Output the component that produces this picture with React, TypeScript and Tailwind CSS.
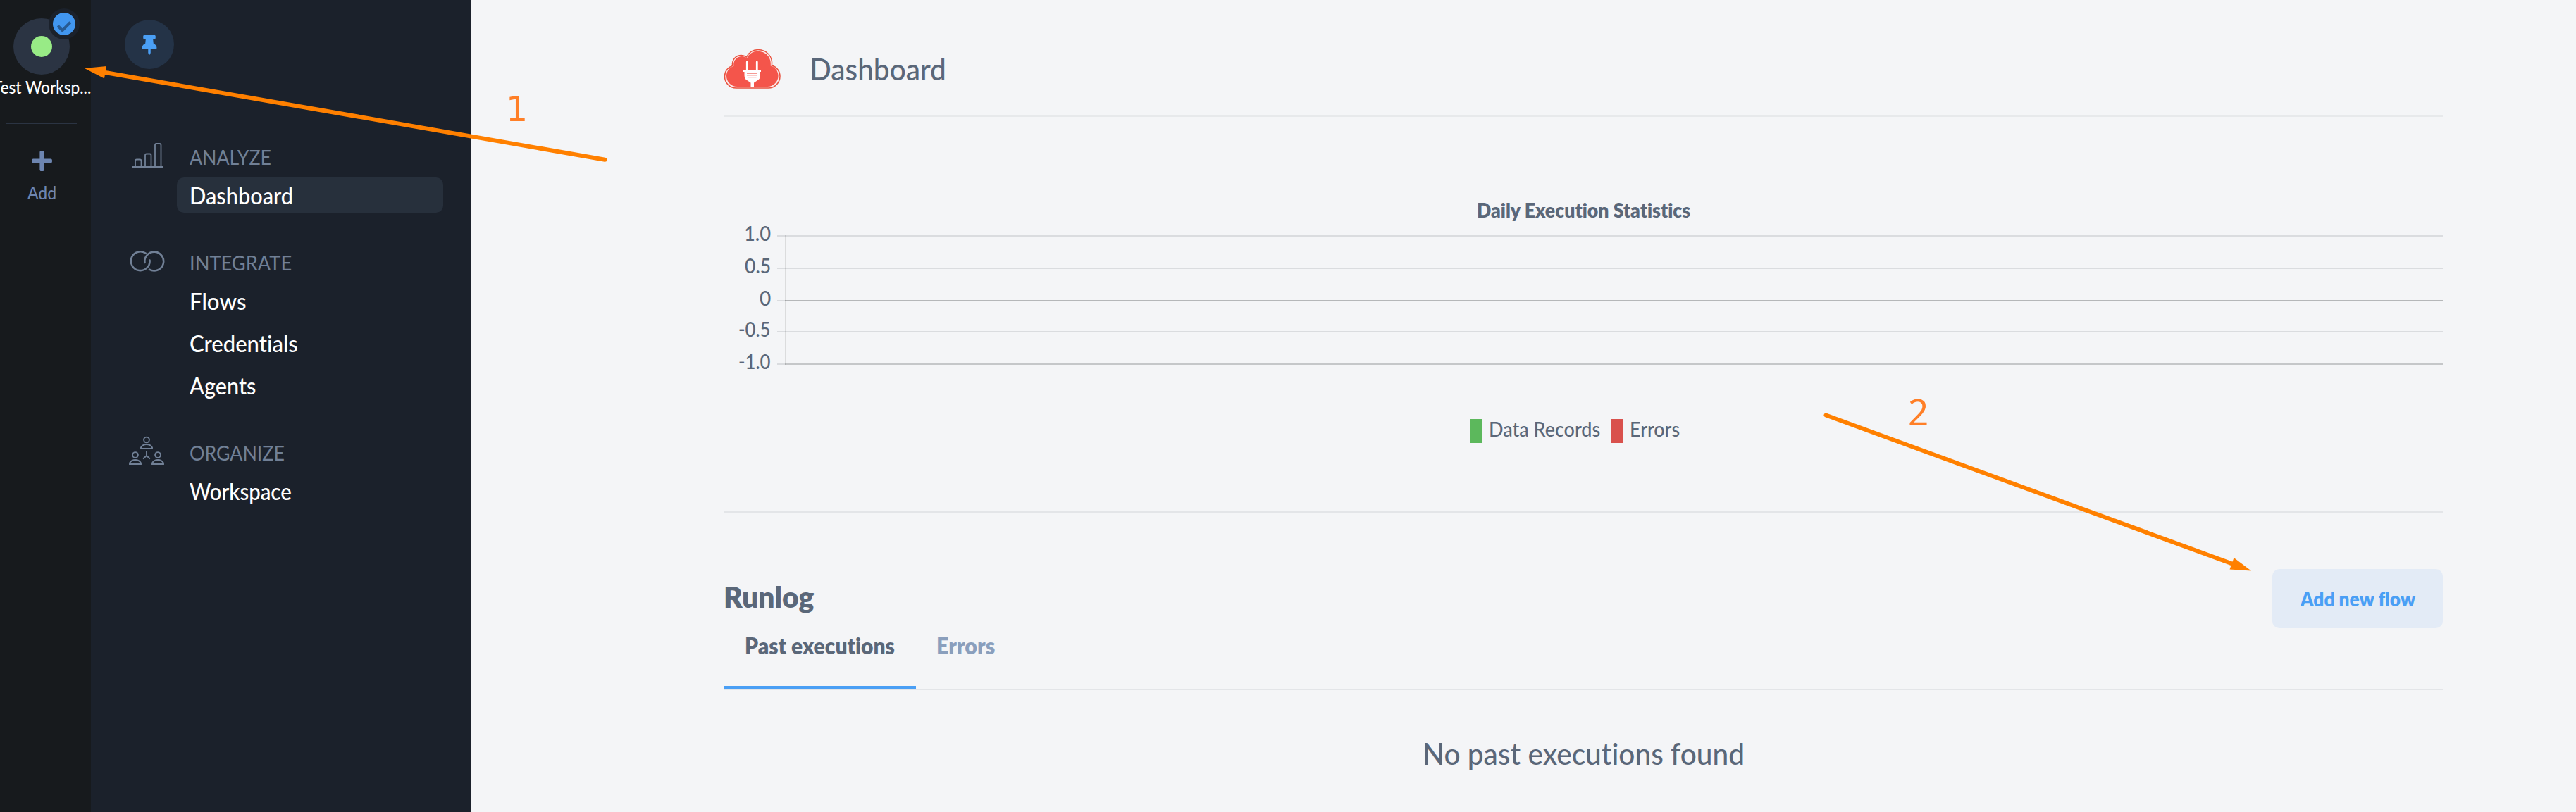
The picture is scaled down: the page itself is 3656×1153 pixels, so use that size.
import { useLayoutEffect, useRef, type ReactNode } from "react";
import { FaCheck, FaPlus, FaThumbtack } from "react-icons/fa";

/** One line of text, condensed horizontally to fill the width of its box. */
function Fit({ className, children }: { className: string; children: ReactNode }) {
  const box = useRef<HTMLSpanElement>(null);
  const text = useRef<HTMLSpanElement>(null);
  useLayoutEffect(() => {
    const b = box.current;
    const t = text.current;
    if (b && t) t.style.transform = `scaleX(${b.clientWidth / t.offsetWidth})`;
  }, []);
  return (
    <span ref={box} className={`block shrink-0 whitespace-nowrap ${className}`}>
      <span ref={text} className="inline-block origin-left">
        {children}
      </span>
    </span>
  );
}

function BarsIcon() {
  return (
    <svg className="h-[38px] w-[50px]" viewBox="183 201 50 38" fill="none" stroke="#718096" strokeWidth="1.8">
      <path d="M187 237H232" strokeWidth="2" />
      <path d="M192 236V228.500Q192 226.500 194 226.500H198.500Q200.500 226.500 200.500 228.500V236" />
      <path d="M206 236V220.500Q206 218.500 208 218.500H212.500Q214.500 218.500 214.500 220.500V236" />
      <path d="M220 236V206Q220 204 222 204H226.500Q228.500 204 228.500 206V236" />
    </svg>
  );
}

function RingsIcon() {
  return (
    <svg className="h-[34px] w-[50px]" viewBox="184 354 50 34" fill="none" stroke="#718096" strokeWidth="2.6" strokeLinecap="round">
      <path d="M206.600 359.600A13.400 13.400 0 1 0 212.500 369.500" />
      <path d="M205.500 373A13.400 13.400 0 1 1 212 382.600" />
    </svg>
  );
}

function PeopleIcon() {
  return (
    <svg className="h-[42px] w-[52px]" viewBox="182 619 52 42" fill="none" stroke="#718096" strokeWidth="1.9">
      <circle cx="208" cy="624.500" r="3.900" />
      <circle cx="192" cy="646" r="3.900" />
      <circle cx="224" cy="646" r="3.900" />
      <path d="M200 637V635.500Q202.500 631 208 631T216 635.500V637Z" />
      <path d="M184 659V657.500Q186.500 653 192 653T200 657.500V659Z" />
      <path d="M216 659V657.500Q218.500 653 224 653T232 657.500V659Z" />
      <path d="M208 640V647L203 651.500M208 647L213 651.500" />
    </svg>
  );
}

function CloudLogo() {
  const cloud = "M18 56C8 56 1.500 48 1.500 39.500C1.500 32 6 26.500 12.500 24.500C11.500 15 18 9.500 25 9.500C28 9.500 30.500 10.500 32.500 12C36 5 42 1.500 49 1.500C61 1.500 70 11 68.500 24C75.500 26 80 32 80 39.500C80 48 73 56 63.500 56Z";
  return (
    <svg className="h-[59px] w-[82px] shrink-0" viewBox="0 0 82 59" fill="none">
      <path d={cloud} fill="#fbe9e8" stroke="#e9523f" strokeWidth="1.500" />
      <path d={cloud} fill="#f4554b" transform="translate(2.600 2.300) scale(.937 .925)" />
      <path d="M33.300 19V31M47.300 19V31" stroke="#fff" strokeWidth="2.800" strokeLinecap="round" />
      <path d="M28 30H53V33H52V38Q52 43.500 47.500 45.500L43 48.500V55H38.500V48.500L34 45.500Q29.500 43.500 29.500 38V33H28Z" fill="#fff" />
      <path d="M33 35.300H48M33 38H48M34.500 40.700H46.500" stroke="#f59a94" strokeWidth="1.200" />
    </svg>
  );
}

type Item = { label: string; width: string; active?: boolean };

function Section({ icon, iconBox, title, titleWidth, items }: { icon: ReactNode; iconBox: string; title: string; titleWidth: string; items: Item[] }) {
  return (
    <section>
      <div className="mb-[5px] flex h-[50px]">
        <div className={`w-[140px] shrink-0 ${iconBox}`}>{icon}</div>
        <Fit className={`text-[29.500px] leading-[52px] font-normal text-[#718096] ${titleWidth}`}>{title}</Fit>
      </div>
      <nav className="ml-[122px] flex w-[378px] flex-col gap-2.5">
        {items.map((it) => (
          <a key={it.label} className={`flex h-[50px] rounded-[10px] pl-[18px] ${it.active ? "bg-[#27303c]" : ""}`}>
            <Fit className={`text-[32px] leading-[51px] text-white ${it.width}`}>{it.label}</Fit>
          </a>
        ))}
      </nav>
    </section>
  );
}

function AxisRow({ label, width, height, line }: { label: string; width: string; height: string; line: string }) {
  return (
    <div className={`flex items-start ${height}`}>
      <div className="-mt-[21px] flex w-[67px] shrink-0 justify-end">
        <Fit className={`text-[28px] leading-[36px] ${width}`}>{label}</Fit>
      </div>
      <div className="ml-[9px] h-[2px] w-[11px] bg-[#dadcdf]" />
      <div className={`h-[2px] flex-1 ${line}`} />
    </div>
  );
}

export default function App() {
  return (
    <div className="relative flex h-[1153px] w-[3656px] overflow-hidden bg-[#f4f5f7] font-['Lato',sans-serif] font-medium text-[#5a6779] [font-variant-ligatures:none]">
      <aside className="flex w-[129px] shrink-0 flex-col items-center overflow-hidden bg-[#171a1d] pr-[11px]">
        <div className="relative mt-[26px] flex size-20 shrink-0 items-center justify-center rounded-full bg-[#2b3443]">
          <div className="size-[30px] rounded-full bg-[#98eb86]" />
          <div className="absolute -top-[14px] left-[50px] flex size-11 items-center justify-center rounded-full bg-[#1b212b]">
            <div className="flex size-8 items-center justify-center rounded-full bg-[#4196f0] pt-2">
              <FaCheck className="size-5 text-[#275a93]" />
            </div>
          </div>
        </div>
        <Fit className="mt-[3px] w-[139px] text-[24px] leading-[30px] text-white">Test Worksp...</Fit>
        <div className="mt-[35px] h-[2px] w-[100px] shrink-0 bg-[#2b3443]" />
        <FaPlus className="mt-[36px] size-[33px] shrink-0 text-[#6d85b0]" />
        <Fit className="mt-[14px] w-[41px] text-[24px] leading-[30px] text-[#6d85b0]">Add</Fit>
      </aside>

      <aside className="flex w-[540px] shrink-0 flex-col bg-[#1b212b]">
        <button className="mt-7 ml-12 flex size-[70px] shrink-0 items-center justify-center rounded-full bg-[#243347]">
          <FaThumbtack className="mt-[2px] size-7 text-[#4a9ff5]" />
        </button>
        <div className="mt-[99px] flex flex-col gap-[45px]">
          <Section
            icon={<BarsIcon />}
            iconBox="pl-[54px] pt-[4px]"
            title="ANALYZE"
            titleWidth="w-[116px]"
            items={[{ label: "Dashboard", width: "w-[147px]", active: true }]}
          />
          <Section
            icon={<RingsIcon />}
            iconBox="pl-[55px] pt-[7px]"
            title="INTEGRATE"
            titleWidth="w-[145px]"
            items={[
              { label: "Flows", width: "w-[80px]" },
              { label: "Credentials", width: "w-[154px]" },
              { label: "Agents", width: "w-[94px]" },
            ]}
          />
          <Section
            icon={<PeopleIcon />}
            iconBox="pl-[53px] pt-[2px]"
            title="ORGANIZE"
            titleWidth="w-[135px]"
            items={[{ label: "Workspace", width: "w-[145px]" }]}
          />
        </div>
      </aside>

      <main className="ml-[358px] flex w-[2440px] flex-col">
        <header className="flex h-[166px] shrink-0 border-b-2 border-[#e7e9eb] pt-[69px]">
          <CloudLogo />
          <Fit className="ml-[40px] w-[194px] text-[42px] leading-[58px]">Dashboard</Fit>
        </header>

        <section className="flex h-[562px] shrink-0 flex-col border-b-2 border-[#e3e5e8] pt-[114px]">
          <Fit className="w-[303px] self-center text-[28px] leading-[36px] font-extrabold">Daily Execution Statistics</Fit>
          <div className="relative mt-[18px] flex flex-col">
            <AxisRow label="1.0" width="w-[38px]" height="h-[46px]" line="bg-[#dadcdf]" />
            <AxisRow label="0.5" width="w-[37px]" height="h-[46px]" line="bg-[#dadcdf]" />
            <AxisRow label="0" width="w-[16px]" height="h-[44px]" line="bg-[#b5b7b9]" />
            <AxisRow label="-0.5" width="w-[46px]" height="h-[46px]" line="bg-[#dadcdf]" />
            <AxisRow label="-1.0" width="w-[46px]" height="h-[2px]" line="bg-[#c5c7c9]" />
            <div className="absolute top-0 left-[87px] h-[184px] w-[2px] bg-black/10" />
          </div>
          <div className="mt-[77px] ml-[1060px] flex h-[34px]">
            <div className="w-4 bg-[#5cb85c]" />
            <Fit className="ml-[10px] w-[158px] text-[28px] leading-[29px]">Data Records</Fit>
            <div className="ml-4 w-4 bg-[#d9514d]" />
            <Fit className="ml-[10px] w-[71px] text-[28px] leading-[29px]">Errors</Fit>
          </div>
        </section>

        <section className="flex h-[252px] shrink-0 flex-col border-b-2 border-[#e3e5e8]">
          <div className="flex h-[164px] shrink-0 items-start justify-between pt-20">
            <h2 className="pt-[10px]">
              <Fit className="w-[128px] text-[42px] leading-[58px] font-extrabold">Runlog</Fit>
            </h2>
            <button className="flex h-[84px] w-[242px] justify-center rounded-[10px] bg-[#e3ebf6]">
              <Fit className="w-[163px] text-left text-[28px] leading-[84px] font-extrabold text-[#4a9ff5]">Add new flow</Fit>
            </button>
          </div>
          <div className="flex flex-1 text-[32px] leading-[50px] font-extrabold">
            <div className="w-[273px] border-b-4 border-[#4a9ff5] pl-[30px]">
              <Fit className="w-[213px]">Past executions</Fit>
            </div>
            <div className="pl-[29px]">
              <Fit className="w-[83px] text-[#8a9fbd]">Errors</Fit>
            </div>
          </div>
        </section>

        <div className="flex justify-center pt-[61px]">
          <Fit className="w-[457px] text-[42px] leading-[58px]">No past executions found</Fit>
        </div>
      </main>

      <svg className="absolute inset-0 h-[1153px] w-[3656px]" viewBox="0 0 3656 1153">
        <g stroke="#ff8000" strokeWidth="6" strokeLinecap="round">
          <path d="M148 102.700L858.500 226.700" />
          <path d="M2591.500 589.500L3168 800.500" />
        </g>
        <g fill="#ff8000">
          <path d="M120 97L151 94L148 111.500Z" />
          <path d="M3195 810.500L3170.500 792L3164.500 808.500Z" />
        </g>
      </svg>
      <span className="absolute top-[126px] left-[718px] font-['DejaVu_Sans',sans-serif] text-[49px] leading-[60px] font-normal text-[#ff7f27]">1</span>
      <span className="absolute top-[554px] left-[2708px] font-['Noto_Sans',sans-serif] text-[51px] leading-[60px] font-normal text-[#ff7f27]">2</span>
    </div>
  );
}
